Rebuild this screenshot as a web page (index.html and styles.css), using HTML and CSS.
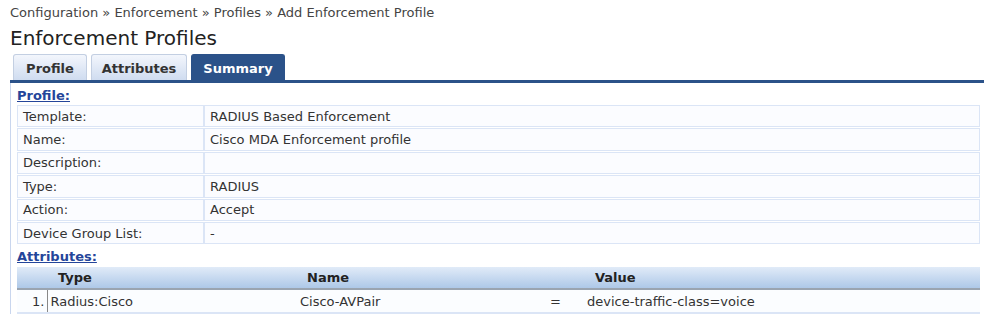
FILE: index.html
```html
<!DOCTYPE html>
<html lang="en">
<head>
  <meta charset="UTF-8">
  <title>Enforcement Profiles</title>
  <link rel="stylesheet" href="styles.css">
</head>
<body>
  <div class="breadcrumb">Configuration &raquo; Enforcement &raquo; Profiles &raquo; Add Enforcement Profile</div>
  <h1>Enforcement Profiles</h1>

  <div class="tabs">
    <a class="tab">Profile</a>
    <a class="tab">Attributes</a>
    <a class="tab active">Summary</a>
  </div>

  <div class="panel">
    <a class="section">Profile:</a>
    <table class="summary">
      <tr><td class="label">Template:</td><td>RADIUS Based Enforcement</td></tr>
      <tr><td class="label">Name:</td><td>Cisco MDA Enforcement profile</td></tr>
      <tr><td class="label">Description:</td><td></td></tr>
      <tr><td class="label">Type:</td><td>RADIUS</td></tr>
      <tr><td class="label">Action:</td><td>Accept</td></tr>
      <tr><td class="label">Device Group List:</td><td>-</td></tr>
    </table>

    <a class="section">Attributes:</a>
    <table class="attrs">
      <tr>
        <th class="num"></th>
        <th class="type">Type</th>
        <th class="name">Name</th>
        <th class="op"></th>
        <th class="value">Value</th>
      </tr>
      <tr>
        <td class="num">1.</td>
        <td class="type">Radius:Cisco</td>
        <td class="name">Cisco-AVPair</td>
        <td class="op">=</td>
        <td class="value">device-traffic-class=voice</td>
      </tr>
    </table>
  </div>
</body>
</html>
```

FILE: styles.css
```css
body {
  font-family: "DejaVu Sans", Verdana, sans-serif;
  font-size: 13px;
  color: #333;
  margin: 0;
  padding: 4px 0 0 10px;
  background: #fff;
}
.breadcrumb {
  color: #444;
  line-height: 18px;
}
h1 {
  font-size: 20px;
  font-weight: normal;
  color: #222;
  margin: 4px 0 4px 0;
  line-height: 24px;
}
.tabs {
  display: flex;
  gap: 4px;
  padding-left: 3px;
  border-bottom: 3px solid #2b5289;
  height: 26px;
}
.tab {
  display: block;
  box-sizing: border-box;
  height: 26px;
  padding: 6px 0 0 0;
  text-align: center;
  font-weight: bold;
  color: #333;
  background: linear-gradient(#f3f6fc, #cfdcf0);
  border: 1px solid #c3cfe2;
  border-bottom: none;
  border-radius: 3px 3px 0 0;
}
.tab:nth-child(1) { width: 74px; }
.tab:nth-child(2) { width: 96px; }
.tab.active {
  width: 94px;
  color: #fff;
  background: #2b5289;
  border-color: #2b5289;
}
.panel {
  border-left: 1px solid #c9d6ee;
  padding: 5px 4px 0 6px;
}
.section {
  display: block;
  font-weight: bold;
  color: #24459a;
  text-decoration: underline;
  line-height: 16px;
}
.summary {
  width: 100%;
  border-collapse: separate;
  border-spacing: 0 1px;
  margin: 0 0 4px 0;
}
.summary td {
  background: #fbfcff;
  border: 1px solid #dbe5f6;
  height: 20.4px;
  padding: 0 0 0 5px;
}
.summary td.label {
  width: 180px;
}
.attrs {
  width: 100%;
  table-layout: fixed;
  border-collapse: collapse;
  margin-top: 2px;
}
.attrs th,
.attrs td {
  box-sizing: border-box;
  padding: 0;
  text-align: left;
}
.attrs th {
  background: linear-gradient(#e1ebf8, #adc8e8);
  border-bottom: 2px solid #9aa4b0;
  height: 22px;
  font-weight: bold;
  color: #222;
}
.attrs td {
  background: #fbfdff;
  height: 24px;
  border-bottom: 2px solid #dbe5f6;
}
.attrs .num { width: 30px; }
.attrs td.num { text-align: right; padding-right: 2px; border-right: 1px solid #888; }
.attrs .type { width: 253px; }
.attrs td.type { padding-left: 3px; }
.attrs th.type { padding-left: 11px; }
.attrs .name { width: 250px; }
.attrs th.name { padding-left: 7px; }
.attrs .op { width: 37px; }
.attrs th.value { padding-left: 8px; }
```
